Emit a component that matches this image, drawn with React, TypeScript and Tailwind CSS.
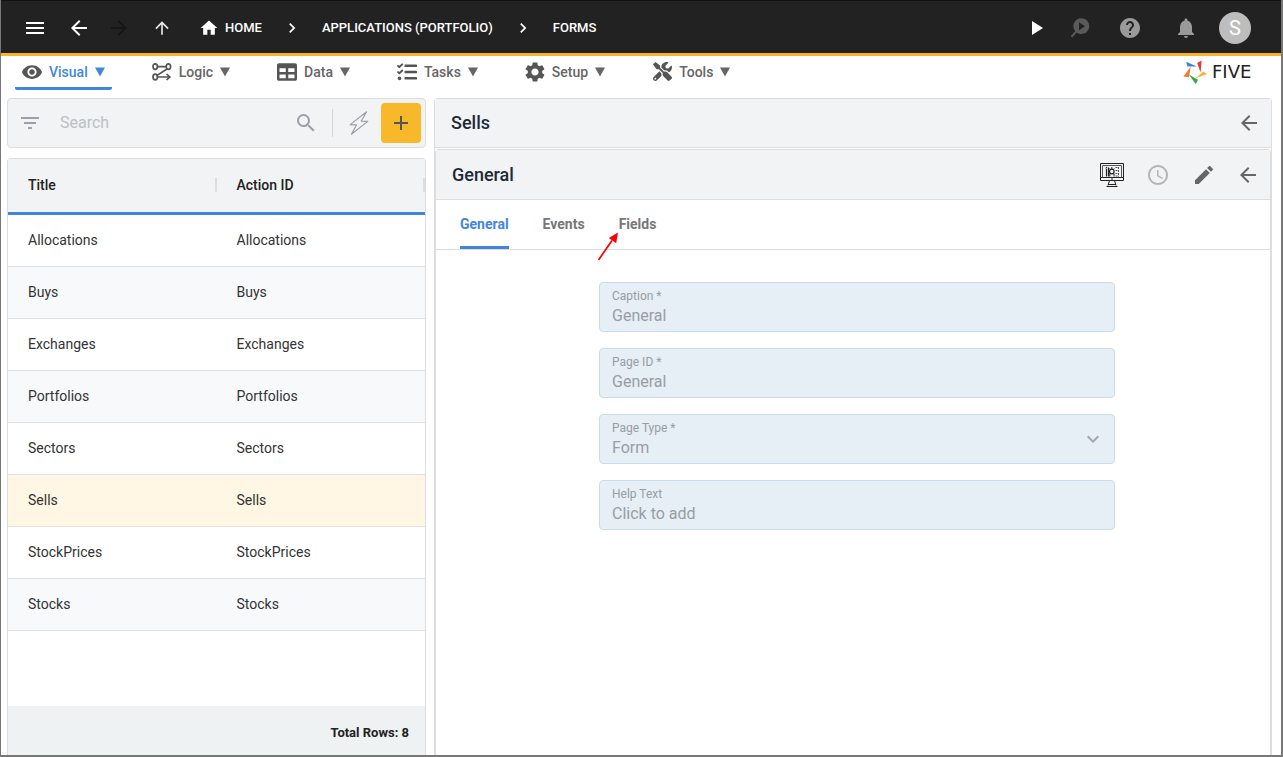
import type { ReactNode } from "react";
import {
  MdAccessTime,
  MdAdd,
  MdArrowBack,
  MdArrowForward,
  MdArrowUpward,
  MdChevronRight,
  MdEdit,
  MdFilterList,
  MdHelp,
  MdHome,
  MdKeyboardArrowDown,
  MdMenu,
  MdNotifications,
  MdPlayArrow,
  MdSearch,
  MdSettings,
  MdVisibility,
} from "react-icons/md";
import { FaTable, FaTasks, FaTools } from "react-icons/fa";

const rows = ["Allocations", "Buys", "Exchanges", "Portfolios", "Sectors", "Sells", "StockPrices", "Stocks"];

function LogicIcon() {
  return (
    <svg width="20" height="20" viewBox="0 0 20 20" fill="none" stroke="currentColor" strokeWidth="1.7" aria-hidden="true">
      <ellipse cx="3.2" cy="4.6" rx="2.2" ry="2.8" />
      <ellipse cx="16.4" cy="4.6" rx="2.2" ry="2.8" />
      <ellipse cx="3.2" cy="15" rx="2.2" ry="2.8" />
      <path d="M5.4 4.6H14.2M15 7L5 13.4M5.4 15H17.4M14.6 12L17.8 15L14.6 18" />
    </svg>
  );
}

function InspectIcon() {
  return (
    <svg width="20" height="20" viewBox="0 0 20 20" aria-hidden="true">
      <path
        fill="currentColor"
        fillRule="evenodd"
        d="M11.3 0.2a7.9 7.9 0 1 1-4.6 14.3L2.2 19.4L0.8 18.2L5.2 13.1A7.9 7.9 0 0 1 11.3 0.2ZM9 4.2V12.2L15 8.2Z"
      />
    </svg>
  );
}

function BoltIcon() {
  return (
    <svg width="20" height="24" viewBox="0 0 20 24" fill="none" stroke="currentColor" strokeWidth="1.2" strokeLinejoin="round" aria-hidden="true">
      <path d="M17.6 0.8L1.2 13.6L7.6 13.8L2.4 23.2L18.8 10.4L12.2 10.2Z" />
    </svg>
  );
}

function MonitorIcon() {
  return (
    <svg width="24" height="24" viewBox="0 0 24 24" fill="none" stroke="#222222" strokeWidth="1" aria-hidden="true">
      <path d="M0.5 0.5H23.5V17.5H0.5ZM0.5 14.5H23.5" />
      <path d="M2.5 14.5V2.5H21.5V14.5" stroke="#555555" />
      <path d="M9.5 17.5L8 22.5M14.5 17.5L16 22.5M6.5 23.5H17.5M8 21.5H16" />
      <path d="M6.5 13.5V6M8.5 13.5V4.5M5.8 5.5L7 4" strokeWidth="1.2" />
      <circle cx="11.8" cy="8.5" r="2.3" strokeWidth="1.2" />
      <path d="M11.8 4V6M9.8 10.5V13.5M14 10.5V13.5M9.5 5.5L10.5 6.5M14.2 5.5L13.2 6.5" />
      <path d="M15.5 4.5H19M15.5 7.5H19M15.5 10.5H19M15.5 13H19M18.5 4V13.5" strokeDasharray="2 1" stroke="#555555" />
      <path d="M11 16H13" />
    </svg>
  );
}

function StarLogo() {
  return (
    <svg width="24" height="24" viewBox="0 0 24 24" aria-hidden="true">
      <path fill="#3f7fd6" d="M3.2 1.8L13.8 6.4L4.4 6.6Z" />
      <path fill="#e5383b" d="M14.2 3L18.6 0.6L17.6 12.6Z" />
      <path fill="#f8b62b" d="M24 14L12.2 18.6L20.4 11.6Z" />
      <path fill="#3aa655" d="M5.8 14.4L15 19.8L12.8 24.2Z" />
      <path fill="#f47b30" d="M7.8 6.6L6 17.2L0.4 16.6Z" />
    </svg>
  );
}

const menu: { label: string; icon: ReactNode }[] = [
  { label: "Visual", icon: <MdVisibility size={22} className="shrink-0" /> },
  { label: "Logic", icon: <LogicIcon /> },
  { label: "Data", icon: <FaTable size={20} /> },
  { label: "Tasks", icon: <FaTasks size={20} /> },
  { label: "Setup", icon: <MdSettings size={24} className="shrink-0" /> },
  { label: "Tools", icon: <FaTools size={19} /> },
];

function Field({ id, label, children }: { id: string; label: string; children: ReactNode }) {
  return (
    <div className="relative flex h-[50px] flex-col rounded border border-[#c9dced] bg-[#e6eef6] px-3 pt-[5px]">
      <label htmlFor={id} className="text-xs leading-4 text-[#989da3]">
        {label}
      </label>
      {children}
    </div>
  );
}

const inputClass = "w-full appearance-none bg-transparent p-0 text-base leading-6 text-[#989da3] opacity-100 outline-none placeholder:text-[#989da3]";

export default function App() {
  return (
    <div className="flex min-h-screen flex-col border-r-2 border-b-2 border-l border-[#777777] bg-white font-['Roboto',sans-serif] text-[#333333]">
      <header className="flex h-14 items-center border-t border-b-3 border-t-[#111111] border-b-[#f7b52a] bg-[#222222] pt-[2px] pr-[30px] pl-[22px] text-white">
        <button type="button" aria-label="Menu"><MdMenu size={24} /></button>
        <button type="button" aria-label="Back" className="ml-5"><MdArrowBack size={24} /></button>
        <button type="button" aria-label="Forward" disabled className="ml-4 text-[#161616]"><MdArrowForward size={24} /></button>
        <button type="button" aria-label="Up" className="ml-[21px] text-[#e8e8e8]"><MdArrowUpward size={20} /></button>
        <nav aria-label="Breadcrumb" className="ml-[27px] flex items-center text-[13px] font-medium">
          <a href="#home" className="flex items-center gap-[6px]"><MdHome size={20} />HOME</a>
          <MdChevronRight size={20} className="mx-5" />
          <a href="#applications">APPLICATIONS (PORTFOLIO)</a>
          <MdChevronRight size={20} className="mx-5" />
          <a href="#forms">FORMS</a>
        </nav>
        <div className="ml-auto flex items-center">
          <button type="button" aria-label="Run"><MdPlayArrow size={24} /></button>
          <button type="button" aria-label="Inspect" disabled className="ml-[22px] text-[#5a5a5a]"><InspectIcon /></button>
          <button type="button" aria-label="Help" className="ml-7 text-[#9a9a9a]"><MdHelp size={24} /></button>
          <button type="button" aria-label="Notifications" className="ml-8 text-[#9a9a9a]"><MdNotifications size={24} /></button>
          <button type="button" aria-label="Account" className="ml-[21px] flex size-8 items-center justify-center rounded-full bg-[#bdbdbd] text-xl leading-none">S</button>
        </div>
      </header>

      <div className="flex h-[42px] items-start justify-between pr-[11px] pl-[14px]">
        <nav aria-label="Main" className="flex gap-[33px]">
          {menu.map((item, i) => (
            <button
              key={item.label}
              type="button"
              className={
                "flex h-[34px] items-center border-b-3 px-[7px] text-sm font-medium " +
                (i === 0 ? "rounded-b-[2px] border-[#4286dc] text-[#4286dc]" : "border-transparent text-[#666666]")
              }
            >
              <span className="mr-[7px] flex h-6 w-5 items-center justify-center text-[#555555]">{item.icon}</span>
              {item.label}
              <svg width="10" height="10" viewBox="0 0 10 10" className="ml-[7px]" fill="currentColor" aria-hidden="true">
                <path d="M0 0.5H10L5 9.5Z" />
              </svg>
            </button>
          ))}
        </nav>
        <a href="#five" className="mt-1 flex items-center gap-[5px] text-[#222222]">
          <StarLogo />
          <span className="w-[58px] font-['DejaVu_Sans',sans-serif] text-lg leading-6">FIVE</span>
        </a>
      </div>

      <main className="grid flex-1 grid-cols-[1fr_2fr] gap-2 pr-[9px] pl-[6px]">
        <section className="flex flex-col gap-[10px]">
          <div className="flex h-[50px] items-center rounded border border-[#dddddd] bg-[#f1f3f5] pr-1 pl-[10px] text-[#9aa0a6]">
            <button type="button" aria-label="Filter"><MdFilterList size={24} /></button>
            <input
              type="text"
              aria-label="Search"
              placeholder="Search"
              className="ml-[18px] min-w-0 flex-1 bg-transparent text-base outline-none placeholder:text-[#bcc0c3]"
            />
            <button type="button" aria-label="Search" className="mr-[14px]"><MdSearch size={24} /></button>
            <div className="h-7 w-px bg-[#d3d6d9]" />
            <button type="button" aria-label="Quick actions" className="mr-3 ml-4"><BoltIcon /></button>
            <button type="button" aria-label="Add" className="flex size-10 items-center justify-center rounded bg-[#f7b92a] text-[#555555]"><MdAdd size={24} /></button>
          </div>

          <div className="flex flex-1 flex-col rounded-t border border-b-0 border-[#dddddd]">
            <table className="w-full table-fixed border-separate border-spacing-0 text-left text-sm">
              <thead>
                <tr className="h-14 bg-[#f1f3f5] text-[#222222]">
                  {["Title", "Action ID"].map((h) => (
                    <th key={h} className="border-b-3 border-[#4286dc] p-0 pb-[2px] font-medium">
                      <div className="flex items-center justify-between pl-5">
                        {h}
                        <span className="h-[14px] w-[2px] bg-[#dddddd]" />
                      </div>
                    </th>
                  ))}
                </tr>
              </thead>
              <tbody>
                {rows.map((r) => (
                  <tr key={r} className={"h-[52px] " + (r === "Sells" ? "bg-[#fff6e3]" : "even:bg-[#f7f9fb]")}>
                    <td className="border-b border-[#dfe2e4] p-0 pb-[2px] pl-5">{r}</td>
                    <td className="border-b border-[#dfe2e4] p-0 pb-[2px] pl-5">{r}</td>
                  </tr>
                ))}
              </tbody>
            </table>
            <div className="mt-auto flex h-[49px] items-center justify-end bg-[#eef2f3] px-4 pt-1 text-[13px] font-bold text-[#222222]">Total Rows: 8</div>
          </div>
        </section>

        <section className="flex flex-col rounded-t border border-b-0 border-[#dddddd]">
          <div className="mb-px flex h-[49px] items-center justify-between border-b border-[#dddddd] bg-[#f1f3f5] pr-[10px] pl-4">
            <h1 className="text-lg font-medium text-[#1f2937]">Sells</h1>
            <button type="button" aria-label="Close Sells" className="text-[#666666]"><MdArrowBack size={24} /></button>
          </div>
          <div className="flex flex-1 flex-col rounded-t border border-b-0 border-[#dddddd]">
            <div className="flex h-[50px] items-center border-b border-[#dddddd] bg-[#f1f3f5] pr-[10px] pl-4 text-[#666666]">
              <h2 className="mr-auto text-lg font-medium text-[#1f2937]">General</h2>
              <button type="button" aria-label="Preview"><MonitorIcon /></button>
              <button type="button" aria-label="History" disabled className="ml-[22px] text-[#b5b5b5]"><MdAccessTime size={24} /></button>
              <button type="button" aria-label="Edit" className="ml-[22px]"><MdEdit size={24} /></button>
              <button type="button" aria-label="Close General" className="ml-5"><MdArrowBack size={24} /></button>
            </div>
            <div role="tablist" className="relative flex h-[50px] gap-[34px] border-b border-[#dddddd] px-6 text-sm font-bold text-[#777777]">
              <button type="button" role="tab" aria-selected="true" className="border-b-3 border-[#4286dc] pt-[2px] text-[#4286dc]">General</button>
              <button type="button" role="tab" aria-selected="false" className="border-b-3 border-transparent pt-[2px]">Events</button>
              <button type="button" role="tab" aria-selected="false" className="border-b-3 border-transparent pt-[2px]">Fields</button>
              <svg width="22" height="30" viewBox="0 0 22 30" className="absolute top-8 left-[161px]" aria-hidden="true">
                <path d="M1.5 28L15 8.5" stroke="#ff0000" strokeWidth="1.7" />
                <path d="M21 0.5L19.2 11.2L11.8 6Z" fill="#ff0000" />
              </svg>
            </div>
            <form className="flex justify-center pt-8 pr-6 pl-8">
              <div className="flex w-full max-w-[516px] flex-col gap-4">
                <Field id="caption" label="Caption *"><input id="caption" type="text" disabled value="General" className={inputClass} /></Field>
                <Field id="page-id" label="Page ID *"><input id="page-id" type="text" disabled value="General" className={inputClass} /></Field>
                <Field id="page-type" label="Page Type *">
                  <select id="page-type" disabled className={inputClass}><option>Form</option></select>
                  <MdKeyboardArrowDown size={24} className="pointer-events-none absolute top-3 right-[9px] text-[#a3a8ae]" />
                </Field>
                <Field id="help-text" label="Help Text"><input id="help-text" type="text" disabled placeholder="Click to add" className={inputClass} /></Field>
              </div>
            </form>
          </div>
        </section>
      </main>
    </div>
  );
}
